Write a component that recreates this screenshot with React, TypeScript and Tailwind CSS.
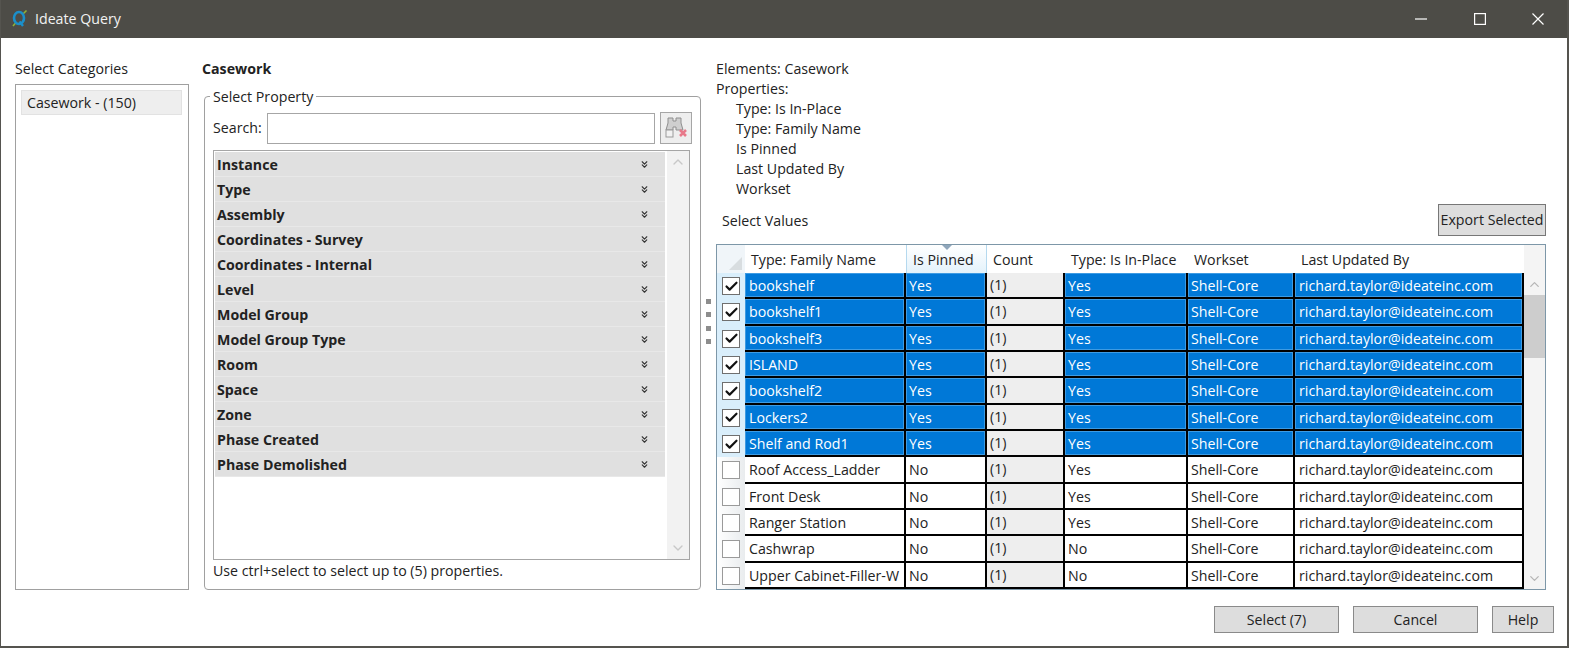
import { ChevronUp, ChevronDown, ChevronsDown, Check } from 'lucide-react';

const font = "font-['Open_Sans','Noto_Sans',sans-serif]";

const groups = [
  'Instance', 'Type', 'Assembly', 'Coordinates - Survey', 'Coordinates - Internal', 'Level', 'Model Group',
  'Model Group Type', 'Room', 'Space', 'Zone', 'Phase Created', 'Phase Demolished',
];

const selected = ['bookshelf', 'bookshelf1', 'bookshelf3', 'ISLAND', 'bookshelf2', 'Lockers2', 'Shelf and Rod1'];
const rows = [
  ...selected.map((name) => ({ name, pinned: 'Yes', inPlace: 'Yes', on: true })),
  { name: 'Roof Access_Ladder', pinned: 'No', inPlace: 'Yes', on: false },
  { name: 'Front Desk', pinned: 'No', inPlace: 'Yes', on: false },
  { name: 'Ranger Station', pinned: 'No', inPlace: 'Yes', on: false },
  { name: 'Cashwrap', pinned: 'No', inPlace: 'No', on: false },
  { name: 'Upper Cabinet-Filler-W', pinned: 'No', inPlace: 'No', on: false },
];

const gridCols = 'grid grid-cols-[28px_161px_81px_78px_123px_107px_229px]';

function Logo() {
  return (
    <svg width="20" height="20" viewBox="0 0 20 20" className="mr-[5px]">
      <path d="M3 17 L6 13.5" stroke="#8fb339" strokeWidth="1.6" />
      <path d="M13 5 L16.5 1.5" stroke="#8fb339" strokeWidth="1.6" />
      <ellipse cx="9" cy="9" rx="5" ry="6" fill="none" stroke="#1b8fca" strokeWidth="2.6" />
      <path d="M9.5 12.5 L13 17" stroke="#1b8fca" strokeWidth="2.4" />
    </svg>
  );
}

function Binoculars() {
  return (
    <svg width="26" height="26" viewBox="0 0 26 26">
      <path d="M5 3h5v3h3V3h5v5l2 7h-7v-3h-3v3H3l2-7z" fill="#cfcfcf" stroke="#8e8e8e" strokeWidth="1" />
      <rect x="3" y="15" width="7" height="7" fill="#f2f2f2" stroke="#9a9a9a" />
      <path d="M17 15l6 6M23 15l-6 6" stroke="#e8798a" strokeWidth="2.6" />
    </svg>
  );
}

function WindowIcons() {
  return (
    <div className="ml-auto flex items-center gap-[46.5px] pr-[23px]">
      <svg width="12" height="12" viewBox="0 0 12 12" className="text-white">
        <path d="M0 6h12" stroke="currentColor" strokeWidth="1.2" />
      </svg>
      <svg width="12" height="12" viewBox="0 0 12 12" className="text-white">
        <rect x="0.6" y="0.6" width="10.8" height="10.8" fill="none" stroke="currentColor" strokeWidth="1.2" />
      </svg>
      <svg width="12" height="12" viewBox="0 0 12 12" className="text-white">
        <path d="M0.5 0.5l11 11M11.5 0.5l-11 11" stroke="currentColor" strokeWidth="1.2" />
      </svg>
    </div>
  );
}

function GrayButton({ label, w }: { label: string; w: string }) {
  return (
    <button className={`h-[27px] ${w} bg-[#dddddd] border border-[#8a8a8a] text-[14.2px] text-[#222]`}>{label}</button>
  );
}

export default function App() {
  return (
    <div className={`w-[1569px] h-[648px] flex flex-col bg-white text-[14.2px] leading-5 text-[#222] ${font} border-l border-r-2 border-b-2 border-[#55544f]`}>
      <div className="h-[38px] shrink-0 bg-[#4d4c47] flex items-center pl-[9px] text-[#f2f2f2]">
        <Logo />
        <span>Ideate Query</span>
        <WindowIcons />
      </div>

      <div className="flex-1 flex flex-col pl-[14px] pr-[21px]">
        <div className="flex h-[552px] items-stretch">
          {/* categories */}
          <div className="w-[174px] shrink-0 flex flex-col">
            <div className="pt-[21px] h-[46px]">Select Categories</div>
            <div className="h-[506px] border border-[#a0a0a0] pl-[5px] pr-[6px] pt-[5px]">
              <div className="h-[25px] w-full bg-[#eeeeee] border border-[#e2e2e2] pl-[5px] flex items-center">Casework - (150)</div>
            </div>
          </div>

          {/* property */}
          <div className="w-[497px] shrink-0 ml-[15px] flex flex-col">
            <div className="pt-[21px] h-[58px] -ml-[2px] font-bold">Casework</div>
            <div className="relative h-[494px] border border-[#a0a0a0] rounded-[4px] px-[8px] pt-[15px] flex flex-col">
              <span className="absolute left-[5px] -top-[10px] bg-white px-[3px]">Select Property</span>
              <div className="flex items-center h-[32px]">
                <span className="w-[54px] shrink-0">Search:</span>
                <div className="w-[388px] h-[31px] border border-[#a6a6a6]" />
                <div className="ml-[5px] w-[32px] h-[32px] bg-[#eeeeee] border border-[#a6a6a6] flex items-center justify-center">
                  <Binoculars />
                </div>
              </div>
              <div className="mt-[6px] h-[410px] w-[477px] border border-[#a6a6a6] flex">
                <div className="w-[451px] ml-[1px] mt-[1px] flex flex-col">
                  {groups.map((g) => (
                    <div key={g} className="h-[25px] bg-[#e0e0e0] border-b border-[#e8e8e8] flex items-center justify-between pl-[2px] pr-[15px] pt-[2px] font-bold">
                      <span>{g}</span>
                      <ChevronsDown size={11} strokeWidth={2.4} className="text-[#333] -mt-[2px]" />
                    </div>
                  ))}
                </div>
                <div className="w-[22px] ml-[2px] bg-[#f2f2f2] flex flex-col items-center justify-between py-[3px] text-[#c8c8c8]">
                  <ChevronUp size={16} strokeWidth={2} />
                  <ChevronDown size={16} strokeWidth={2} />
                </div>
              </div>
              <div className="mt-[1px]">Use ctrl+select to select up to (5) properties.</div>
            </div>
          </div>

          {/* splitter */}
          <div className="w-[15px] shrink-0 flex flex-col items-center gap-[8.3px] pt-[261px]">
            {[0, 1, 2, 3].map((i) => (
              <div key={i} className="w-[5px] h-[5px] bg-[#8d8d8d]" />
            ))}
          </div>

          {/* values */}
          <div className="flex-1 flex flex-col">
            <div className="pt-[21px] h-[161px]">
              <div>Elements: Casework</div>
              <div>Properties:</div>
              <div className="pl-[20px]">Type: Is In-Place</div>
              <div className="pl-[20px]">Type: Family Name</div>
              <div className="pl-[20px]">Is Pinned</div>
              <div className="pl-[20px]">Last Updated By</div>
              <div className="pl-[20px]">Workset</div>
            </div>
            <div className="h-[45px] flex items-start justify-between pl-[6px]">
              <span className="mt-[12px]">Select Values</span>
              <button className="w-[108px] h-[32px] mt-[5px] bg-[#dddddd] border border-[#777] text-[14.2px]">Export Selected</button>
            </div>
            <div className="h-[346px] border border-[#7d97a8] flex">
              <div className="flex-1 flex flex-col">
                <div className={`${gridCols} h-[28px] shrink-0`}>
                  <div className="bg-[#f0f5f9] flex items-end justify-end pr-[3px] pb-[3px]">
                    <div className="w-[13px] h-[13px] bg-[#d8dde0] [clip-path:polygon(100%_0,100%_100%,0_100%)]" />
                  </div>
                  <div className="pl-[6px] pt-[2px] flex items-center">Type: Family Name</div>
                  <div className="relative pl-[6px] pt-[2px] flex items-center bg-gradient-to-b from-white to-[#e3f2fb] border-x border-[#b5d9ef]">
                    Is Pinned
                    <div className="absolute top-0 left-[35px] w-[10px] h-[5px] bg-[#8fa6bb] [clip-path:polygon(0_0,100%_0,50%_100%)]" />
                  </div>
                  <div className="pl-[6px] pt-[2px] flex items-center">Count</div>
                  <div className="pl-[6px] pt-[2px] flex items-center">Type: Is In-Place</div>
                  <div className="pl-[6px] pt-[2px] flex items-center">Workset</div>
                  <div className="pl-[6px] pt-[2px] flex items-center">Last Updated By</div>
                </div>
                <div className="flex-1 grid grid-rows-[repeat(12,1fr)]">
                  {rows.map((r) => {
                    const cell = r.on
                      ? 'bg-[#0078d7] text-white border-b-2 border-r-2 border-black shadow-[inset_0_0_0_1px_#3d9be3] pt-[2px]'
                      : 'bg-white text-[#222] border-b-2 border-r-2 border-black pt-[2px]';
                    return (
                      <div key={r.name} className={gridCols}>
                        <div className={`${r.on ? 'bg-[#d9eefb]' : 'bg-gradient-to-r from-white to-[#e9ecee]'} flex items-center justify-center`}>
                          <div className={`w-[18px] h-[18px] border ${r.on ? 'border-[#6f6f6f]' : 'border-[#9a9a9a]'} bg-white flex items-center justify-center`}>
                            {r.on && <Check size={15} strokeWidth={3.4} className="text-[#111]" />}
                          </div>
                        </div>
                        <div className={`${cell} pl-[4px] flex items-center whitespace-nowrap overflow-hidden`}>{r.name}</div>
                        <div className={`${cell} pl-[3px] flex items-center`}>{r.pinned}</div>
                        <div className="bg-[#eeeeee] text-[#222] border-b-2 border-r-2 border-black pl-[3px] flex items-center">(1)</div>
                        <div className={`${cell} pl-[3px] flex items-center`}>{r.inPlace}</div>
                        <div className={`${cell} pl-[3px] flex items-center`}>Shell-Core</div>
                        <div className={`${cell} pl-[4px] flex items-center`}>richard.taylor@ideateinc.com</div>
                      </div>
                    );
                  })}
                </div>
              </div>
              <div className="w-[21px] shrink-0 bg-[#f4f4f4] flex flex-col">
                <div className="h-[28px]" />
                <div className="h-[22px] flex items-center justify-center text-[#b5b5b5]">
                  <ChevronUp size={15} strokeWidth={2} />
                </div>
                <div className="h-[63px] bg-[#cdcdcd]" />
                <div className="flex-1" />
                <div className="h-[21px] flex items-center justify-center text-[#b5b5b5]">
                  <ChevronDown size={15} strokeWidth={2} />
                </div>
              </div>
            </div>
          </div>
        </div>

        <div className="flex justify-end gap-[14px] mt-[16px] -mr-[8px]">
          <GrayButton label="Select (7)" w="w-[125px]" />
          <GrayButton label="Cancel" w="w-[125px]" />
          <GrayButton label="Help" w="w-[62px]" />
        </div>
      </div>
    </div>
  );
}
